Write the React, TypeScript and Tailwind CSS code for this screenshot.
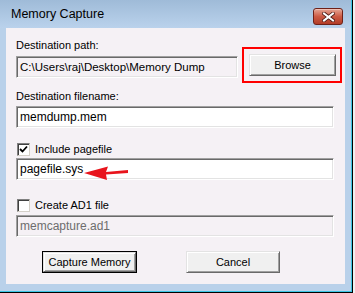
import React from "react";

const sunken =
  "border border-t-[#a0a0a0] border-l-[#a0a0a0] border-r-white border-b-white shadow-[inset_1px_1px_0_#696969,inset_-1px_-1px_0_#e3e3e3]";
const raised =
  "border border-t-[#e3e3e3] border-l-[#e3e3e3] border-r-[#696969] border-b-[#696969] shadow-[inset_1px_1px_0_#ffffff,inset_-1px_-1px_0_#a0a0a0] bg-[#f0f0f0]";

function Check({ checked }: { checked?: boolean }) {
  return (
    <div
      className={`w-[13px] h-[13px] bg-white border border-t-[#808080] border-l-[#808080] border-r-[#d4d0c8] border-b-[#d4d0c8] shadow-[inset_1px_1px_0_#404040] flex items-center justify-center`}
    >
      {checked && (
        <svg width="9" height="9" viewBox="0 0 9 9">
          <path d="M1 4 L3.5 6.5 L8 1.5" stroke="#000" strokeWidth="1.8" fill="none" />
        </svg>
      )}
    </div>
  );
}

export default function App() {
  return (
    <div
      className="w-[355px] h-[293px] bg-[#f0f0f0] overflow-hidden"
      style={{ fontFamily: '"Liberation Sans", Arial, sans-serif' }}
    >
      <div className="w-[353px] h-[293px] border-r border-b border-black">
        <div className="w-[352px] h-[292px] border-r border-b border-[#3cc4e4] bg-[#b9d1ea] flex flex-col">
          {/* Title bar */}
          <div className="h-[28px] bg-gradient-to-b from-[#9fbbd8] to-[#bad2ec] flex justify-between pl-[11px] pr-[8px]">
            <div className="text-[12.5px] text-black pt-[7px] leading-[15px]">Memory Capture</div>
            <div className="mt-[8px] w-[30px] h-[17px] rounded-[3px] border border-[#6e2118] bg-gradient-to-b from-[#e4a595] via-[#cc5a44] to-[#b23c27] shadow-[inset_0_1px_0_#f0c0b4] flex items-center justify-center">
              <svg width="13" height="10" viewBox="0 0 13 10">
                <path d="M2 1.5 L11 8.5 M11 1.5 L2 8.5" stroke="#4a1a14" strokeWidth="3.6" strokeLinecap="square" />
                <path d="M2 1.5 L11 8.5 M11 1.5 L2 8.5" stroke="#ffffff" strokeWidth="2" strokeLinecap="square" />
              </svg>
            </div>
          </div>
          {/* Client area */}
          <div className="ml-[6px] w-[339px] h-[256px] bg-[#f5f1f5] pl-[10px] text-[11px] leading-[13px] text-black flex flex-col">
            <div className="flex items-start">
              <div className="flex flex-col mt-[11px]">
                <div className="h-[13px]">Destination path:</div>
                <div className={`mt-[4px] w-[222px] h-[22px] ${sunken} flex items-center pl-[3px] text-[11.5px]`}>
                  C:\Users\raj\Desktop\Memory Dump
                </div>
              </div>
              <div className="ml-[4px] mt-[19px] w-[100px] h-[36px] border-2 border-[#ff0000] pl-[5px] pt-[5px]">
                <div className={`w-[87px] h-[22px] ${raised} flex items-center justify-center`}>Browse</div>
              </div>
            </div>
            <div className="mt-[7px] h-[13px]">Destination filename:</div>
            <div className={`mt-[3px] w-[318px] h-[22px] bg-white ${sunken} flex items-center pl-[3px] text-[12px]`}>
              memdump.mem
            </div>
            <div className="mt-[15px] flex items-center h-[13px] pl-[1px]">
              <Check checked />
              <span className="ml-[5px]">Include pagefile</span>
            </div>
            <div className={`relative mt-[2px] w-[318px] h-[22px] bg-white ${sunken} flex items-center pl-[3px] text-[12px]`}>
              pagefile.sys
              <svg className="absolute left-[67px] top-[4px]" width="48" height="18" viewBox="0 0 48 18">
                <path d="M0 10 L24 3.5 L22 9 L44 7 L44 10 L22 11.5 L23 17 Z" fill="#e8141c" />
              </svg>
            </div>
            <div className="mt-[19px] flex items-center h-[13px] pl-[1px]">
              <Check />
              <span className="ml-[5px]">Create AD1 file</span>
            </div>
            <div className={`mt-[3px] w-[318px] h-[22px] ${sunken} flex items-center pl-[3px] text-[#6d6d6d] text-[12px]`}>
              memcapture.ad1
            </div>
            <div className="mt-[14px] flex pl-[26px]">
              <div className="w-[95px] h-[22px] border border-black">
                <div className={`w-full h-full ${raised} flex items-center justify-center`}>Capture Memory</div>
              </div>
              <div className={`ml-[49px] w-[94px] h-[22px] ${raised} flex items-center justify-center`}>Cancel</div>
            </div>
          </div>
        </div>
      </div>
    </div>
  );
}
